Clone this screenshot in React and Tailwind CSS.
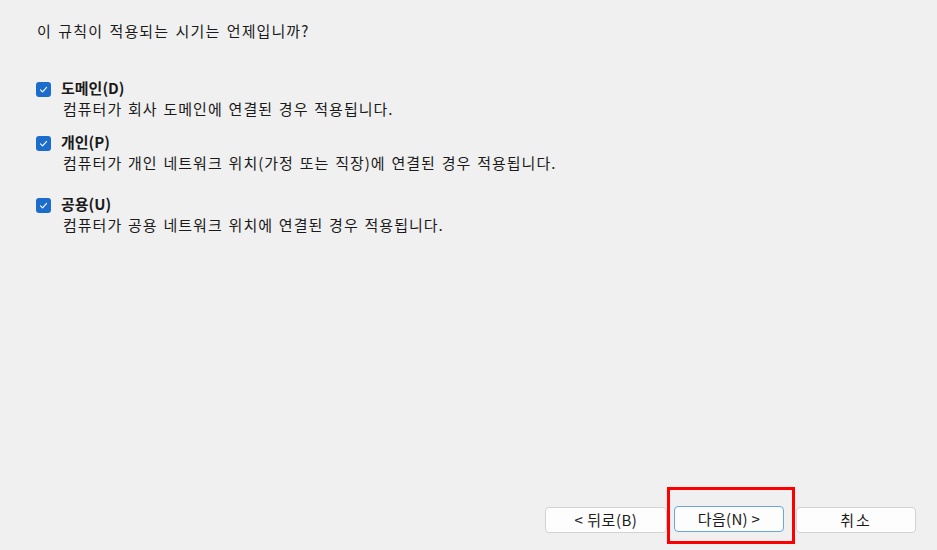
import React from "react";

const font = { fontFamily: '"Noto Sans CJK KR", "Noto Sans", sans-serif' };

function Check() {
  return (
    <div className="w-[15px] h-[15px] rounded-[3px] bg-[#1b6ccb] flex items-center justify-center shrink-0">
      <svg width="9" height="9" viewBox="0 0 9 9" fill="none">
        <path d="M1.5 4.8 L3.6 6.8 L7.6 2.4" stroke="white" strokeWidth="1.1" strokeLinecap="round" strokeLinejoin="round" />
      </svg>
    </div>
  );
}

function Option({ label, desc, className }) {
  return (
    <div className={className}>
      <div className="flex items-center h-[20px]">
        <div className="ml-[36px] mt-[3px]">
          <Check />
        </div>
        <span className="ml-[10px] font-bold text-[15px] leading-[20px]">{label}</span>
      </div>
      <div className="ml-[63px] text-[15px] leading-[20px] mt-[1px] tracking-[1px] [word-spacing:1.5px]">{desc}</div>
    </div>
  );
}

export default function App() {
  return (
    <div
      className="w-[937px] h-[550px] bg-[#f0f0f0] text-[#1a1a1a] flex flex-col overflow-hidden"
      style={font}
    >
      <div className="pt-[21px] pl-[37px] text-[15px] leading-[20px] tracking-[1.1px] [word-spacing:2px]">
        이 규칙이 적용되는 시기는 언제입니까?
      </div>
      <Option
        className="mt-[37px]"
        label="도메인(D)"
        desc="컴퓨터가 회사 도메인에 연결된 경우 적용됩니다."
      />
      <Option
        className="mt-[13px]"
        label="개인(P)"
        desc="컴퓨터가 개인 네트워크 위치(가정 또는 직장)에 연결된 경우 적용됩니다."
      />
      <Option
        className="mt-[21px]"
        label="공용(U)"
        desc="컴퓨터가 공용 네트워크 위치에 연결된 경우 적용됩니다."
      />
      <div className="flex-1" />
      <div className="flex items-start pl-[545px] pb-[6px]">
        <button className="mt-[20px] w-[122px] h-[26px] bg-[#fdfdfd] border border-[#d3d3d3] rounded-[4px] text-[15px] leading-[20px] text-[#1a1a1a] tracking-[0.5px] flex items-center justify-center">
          &lt; 뒤로(B)
        </button>
        <div className="w-[128px] h-[57px] border-[3px] border-[#ff0000] pl-[4px] pt-[16px] flex items-start">
          <button className="w-[110px] h-[26px] bg-[#fdfdfd] border border-[#6aa6e0] rounded-[4px] text-[15px] leading-[20px] text-[#1a1a1a] tracking-[0.3px] flex items-center justify-center">
            다음(N) &gt;
          </button>
        </div>
        <button className="ml-[1px] mt-[20px] w-[120px] h-[26px] bg-[#fdfdfd] border border-[#d3d3d3] rounded-[4px] text-[15px] leading-[20px] text-[#1a1a1a] tracking-[2px] flex items-center justify-center">
          취소
        </button>
      </div>
    </div>
  );
}
